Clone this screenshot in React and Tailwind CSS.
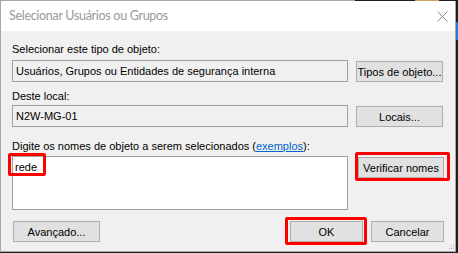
import React from "react";

const Btn = ({ children, className = "" }) => (
  <div
    className={`h-[21px] bg-[#e1e1e1] border border-[#adadad] flex items-center justify-center text-[11px] text-black ${className}`}
  >
    {children}
  </div>
);

const App = () => {
  return (
    <div className="w-[458px] h-[253px] bg-[#1e1e1e] relative overflow-hidden font-['Liberation_Sans',Arial,sans-serif]">
      <div className="w-[456px] h-[252px] border border-[#a8a8a8] bg-[#f0f0f0] flex flex-col">
        {/* Title bar */}
        <div className="h-[30px] bg-white flex items-center justify-between pl-[8px] pr-[7px]">
          <span className="text-[12.5px] tracking-[-0.3px] text-[#999999] font-['Lato',sans-serif]">
            Selecionar Usuários ou Grupos
          </span>
          <svg width="11" height="11" viewBox="0 0 11 11">
            <path d="M0.5 0.5 L10.5 10.5 M10.5 0.5 L0.5 10.5" stroke="#8a8a8a" strokeWidth="1" />
          </svg>
        </div>

        {/* Body */}
        <div className="flex-1 flex flex-col px-[11px] pt-[11px] text-[11px] text-black leading-[14px]">
          <div>Selecionar este tipo de objeto:</div>
          <div className="flex mt-[4px] gap-[8px]">
            <div className="w-[336px] h-[22px] border border-[#a0a0a0] flex items-center pl-[3px]">
              Usuários, Grupos ou Entidades de segurança interna
            </div>
            <Btn className="w-[87px] mt-[1px]">Tipos de objeto...</Btn>
          </div>

          <div className="mt-[7px]">Deste local:</div>
          <div className="flex mt-[2px] gap-[8px]">
            <div className="w-[336px] h-[22px] border border-[#a0a0a0] flex items-center pl-[3px]">
              N2W-MG-01
            </div>
            <Btn className="w-[87px] mt-[1px]">Locais...</Btn>
          </div>

          <div className="mt-[12px]">
            Digite os nomes de objeto a serem selecionados (
            <span className="text-[#0066cc] underline">exemplos</span>):
          </div>
          <div className="flex mt-[3px] gap-[10px]">
            <div className="w-[336px] h-[54px] border border-[#a0a0a0] bg-white pl-[2px] pt-[3px]">
              rede
            </div>
            <Btn className="w-[86px] mt-[1px]">Verificar nomes</Btn>
          </div>

          <div className="flex mt-[11px]">
            <Btn className="w-[87px] ml-[1px]">Avançado...</Btn>
            <div className="flex-1" />
            <Btn className="w-[73px]">OK</Btn>
            <Btn className="w-[73px] ml-[8px]">Cancelar</Btn>
          </div>
        </div>
      </div>

      {/* resize grip */}
      <svg className="absolute left-[448px] top-[244px]" width="7" height="7" viewBox="0 0 7 7">
        <rect x="5" y="0" width="1" height="1" fill="#b0b0b0" />
        <rect x="3" y="2" width="1" height="1" fill="#b0b0b0" />
        <rect x="5" y="2" width="1" height="1" fill="#b0b0b0" />
        <rect x="1" y="4" width="1" height="1" fill="#b0b0b0" />
        <rect x="3" y="4" width="1" height="1" fill="#b0b0b0" />
        <rect x="5" y="4" width="1" height="1" fill="#b0b0b0" />
      </svg>

      {/* background bits */}
      <div className="absolute left-[456px] top-[22px] w-[2px] h-[18px] bg-[#2b79c2]" />
      <div className="absolute left-[355px] top-0 w-[101px] h-px bg-[#1e1e1e]" />
      <div className="absolute left-[415px] top-0 w-[24px] h-px bg-[#c9a55a]" />

      {/* red highlight boxes */}
      <div className="absolute left-[8px] top-[153px] w-[38px] h-[23px] border-[3px] border-[#ff0000] rounded-[2px]" />
      <div className="absolute left-[355px] top-[152px] w-[95px] h-[29px] border-[3px] border-[#ff0000] rounded-[2px]" />
      <div className="absolute left-[285px] top-[217px] w-[82px] h-[28px] border-[3px] border-[#ff0000] rounded-[2px]" />
    </div>
  );
};

export default App;
